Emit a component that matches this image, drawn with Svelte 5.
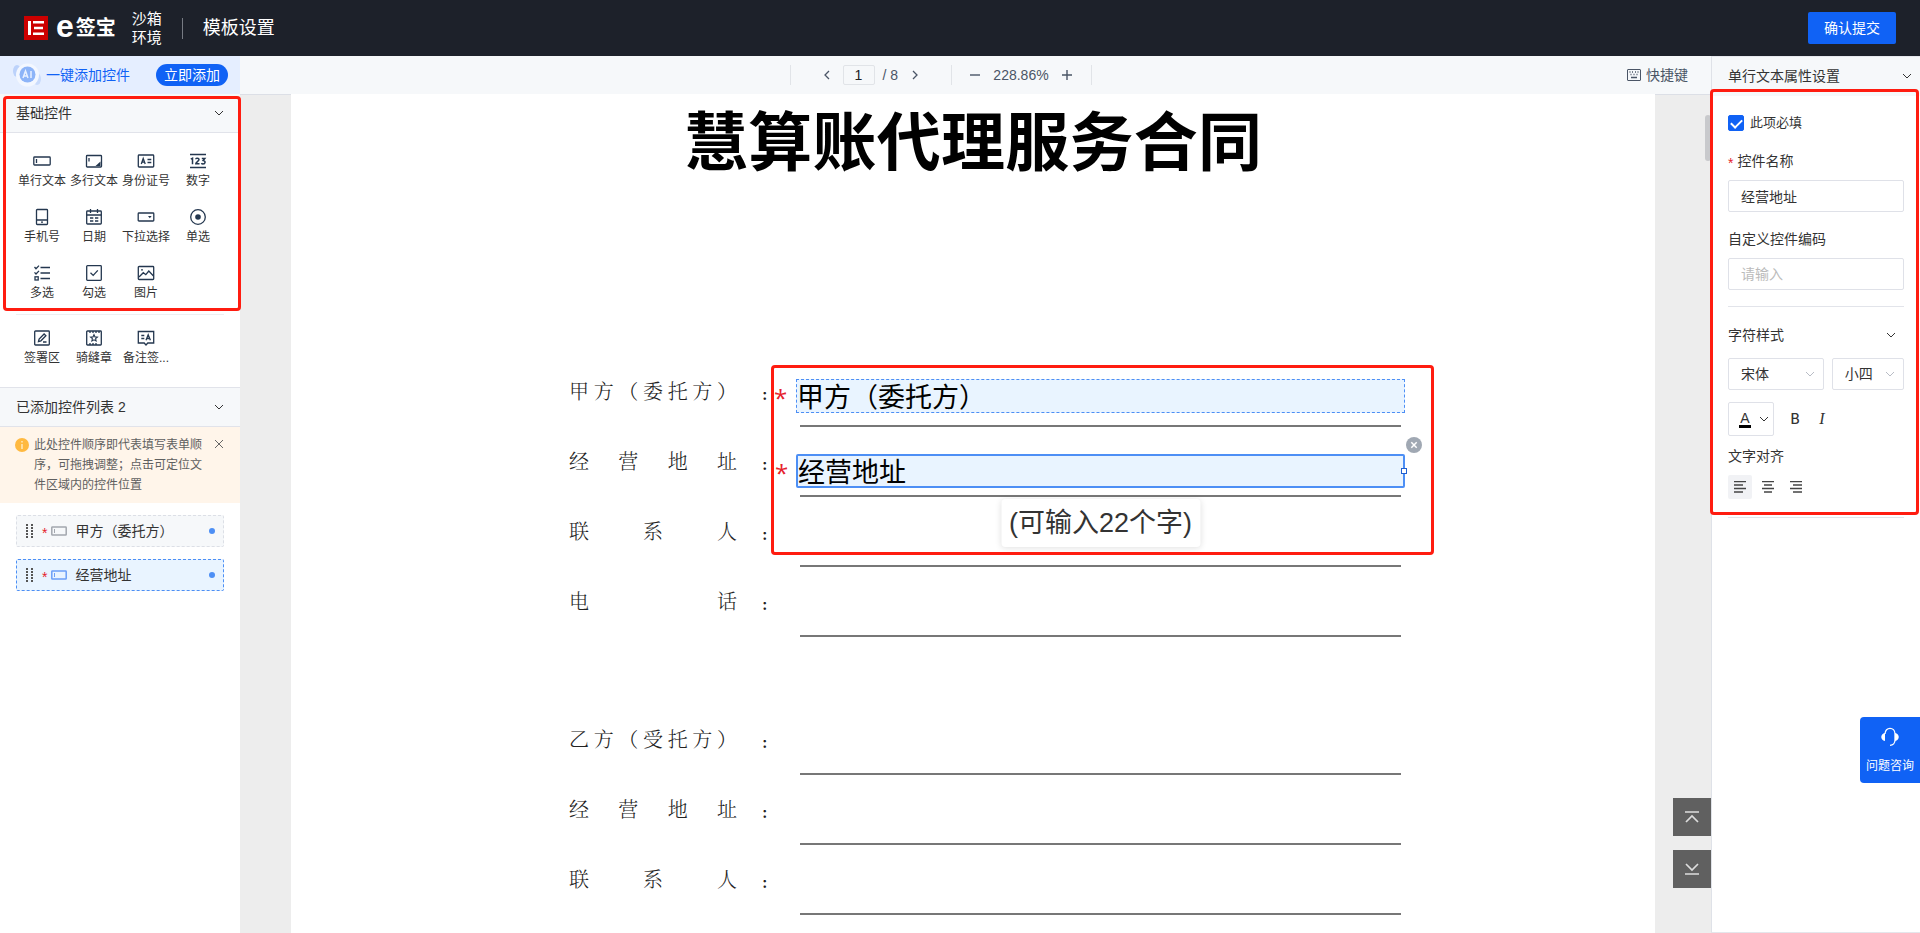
<script>
  const basicControls = [
    { icon: 'single', label: '单行文本' },
    { icon: 'multi', label: '多行文本' },
    { icon: 'idcard', label: '身份证号' },
    { icon: 'number', label: '数字' },
    { icon: 'phone', label: '手机号' },
    { icon: 'date', label: '日期' },
    { icon: 'dropdown', label: '下拉选择' },
    { icon: 'radio', label: '单选' },
    { icon: 'checks', label: '多选' },
    { icon: 'check', label: '勾选' },
    { icon: 'image', label: '图片' }
  ];
  const signControls = [
    { icon: 'sign', label: '签署区' },
    { icon: 'seal', label: '骑缝章' },
    { icon: 'remark', label: '备注签...' }
  ];
  const added = ['甲方（委托方）', '经营地址'];
  let selected = $state(1);
  let required = $state(true);
  let name = $state('经营地址');
  let code = $state('');
  let page = $state('1');

  const partyA = ['甲方（委托方）', '经营地址', '联系人', '电话'];
  const partyB = ['乙方（受托方）', '经营地址', '联系人'];
</script>

{#snippet chevron()}
  <svg class="chevron" width="10" height="10" viewBox="0 0 10 10" fill="none" stroke="currentColor" stroke-width="1" aria-hidden="true"><path d="M1 3l4 4 4-4" /></svg>
{/snippet}

{#snippet glyph(kind)}
  <svg width="18" height="18" viewBox="0 0 18 18" fill="none" stroke="currentColor" stroke-width="1.3" aria-hidden="true">
    {#if kind === 'single'}
      <rect x="0.8" y="5" width="16.4" height="8" rx="0.8" /><path d="M3.5 7v4" />
    {:else if kind === 'multi'}
      <rect x="1.5" y="3.5" width="15" height="11.5" rx="0.8" /><path d="M4 6v3.5" /><path d="M15.500 9.500v4.500h-5z" fill="currentColor" stroke="none" />
    {:else if kind === 'idcard'}
      <rect x="1.3" y="3" width="15.4" height="12" rx="0.8" /><path d="M4.3 12l1.9-5.5L8.200 12M5 10.200h2.500M10.500 7.500h3.800M10.500 10.500h3.800" />
    {:else if kind === 'number'}
      <path d="M1 2.500h16M1 15.500h16" stroke-width="1.500" /><path d="M1.800 7.200l1.700-1v6M6.800 7.300c0-1.500 3.200-1.500 3.200.3 0 1.500-3.200 2.500-3.200 4.100h3.700M12.800 6.500h3l-1.600 2c2.800.3 2.200 3.500-.2 3.500-.8 0-1.300-.2-1.600-.8" stroke-width="1.500" />
    {:else if kind === 'phone'}
      <rect x="3.500" y="1.500" width="11" height="15" rx="0.8" /><path d="M3.500 12h11M8 14.200h2" />
    {:else if kind === 'date'}
      <rect x="1.700" y="3" width="14.600" height="13" rx="0.8" /><path d="M1.700 7h14.600M5.500 1v4M12.500 1v4M5 10h3.300M10 10h3.300M5 13h3.300M10 13h3.300" />
    {:else if kind === 'dropdown'}
      <rect x="1.200" y="5" width="15.600" height="8" rx="0.8" /><path d="M11 8h3.600l-1.800 2.300z" fill="currentColor" stroke="none" />
    {:else if kind === 'radio'}
      <circle cx="9" cy="9" r="7.300" /><circle cx="9" cy="9" r="2.800" fill="currentColor" stroke="none" />
    {:else if kind === 'checks'}
      <path d="M1.500 3l1.500 1.700L6 1.600M1.500 8.400L3 10l3-3.100M7.500 3.500h9.500M7.500 9h9.500M7.500 14.500h9.500" /><rect x="2" y="12.800" width="3.200" height="3.200" />
    {:else if kind === 'check'}
      <rect x="1.700" y="1.700" width="14.600" height="14.600" rx="0.8" /><path d="M5.500 8.800l2.700 2.600 4.600-5" />
    {:else if kind === 'image'}
      <rect x="1.300" y="2.500" width="15.400" height="13" rx="0.8" /><path d="M2 13l4.300-4.300 2.500 2 3-3.700 4.700 5" /><circle cx="5" cy="5.800" r="0.900" fill="currentColor" stroke="none" />
    {:else if kind === 'sign'}
      <rect x="1.700" y="2" width="14.600" height="14" rx="0.8" /><path d="M5.500 12.500l.6-2.500 5-5 1.800 1.800-5 5zM10 13h3.500" />
    {:else if kind === 'seal'}
      <rect x="1.700" y="2" width="14.600" height="14" rx="0.8" /><path d="M5 2v2M8 2v2M11 2v2M14 2v2M5 14v2M8 14v2M11 14v2" /><path d="M9 5.700l1 2.200 2.400.2-1.800 1.600.5 2.300L9 10.800 6.900 12l.5-2.300-1.800-1.600 2.400-.2z" stroke-width="1.100" />
    {:else if kind === 'remark'}
      <path d="M1.300 2.500h15.400v11.500h-5.900L9 16l-1.800-2H1.300z" /><path d="M4.300 6.500h3M4.300 9.500h3M9 11.300l2.200-5.500 2.200 5.500M9.800 9.500h2.800" />
    {/if}
  </svg>
{/snippet}

{#snippet clause(label, index, party)}
  <div class="clause">
    <span class="clause-name">{label}</span>
    <span class="colon">：</span>
    <div class="blank">
      {#if party === 'a' && index === 0}
        <div class="field first"><span class="must">*</span>甲方（委托方）</div>
      {:else if party === 'a' && index === 1}
        <div class="field active">
          <span class="must">*</span>{name}
          <i class="handle"></i>
          <button class="remove" aria-label="删除">
            <svg width="16" height="16" viewBox="0 0 16 16" stroke="#fff" stroke-width="1.500"><path d="M5.300 5.300l5.400 5.400M10.700 5.300l-5.400 5.400" /></svg>
          </button>
          <span class="hint">(可输入22个字)</span>
        </div>
      {/if}
    </div>
  </div>
{/snippet}

<div class="app">
  <header class="topbar">
    <div class="brand">
      <svg width="24" height="24" viewBox="0 0 24 24" aria-hidden="true"><rect width="24" height="24" fill="#cc0000" /><path d="M4 5h3v14H4zM9 5h11v2.500H9zM10 10.800h9v2.500h-9zM9 16.500h11V19H9z" fill="#fff" /></svg>
      <span class="brand-name"><b class="brand-e">e</b>签宝</span>
    </div>
    <span class="env">沙箱环境</span>
    <i class="bar"></i>
    <h1>模板设置</h1>
    <button class="submit">确认提交</button>
  </header>

  <div class="columns">
    <aside class="left">
      <div class="ai">
        <svg width="28" height="28" viewBox="0 0 28 28" aria-hidden="true">
          <ellipse cx="4" cy="10" rx="4" ry="6" fill="#bcd2fb" /><ellipse cx="24" cy="18" rx="4" ry="6" fill="#c9dbfc" />
          <circle cx="14.500" cy="14" r="11.500" fill="#f3f7ff" /><circle cx="14.500" cy="13.500" r="8" fill="#8db4f8" />
          <path d="M10 17l2.500-7 2.500 7M11 15h3M18 10v7" stroke="#e8f0ff" stroke-width="1.500" fill="none" />
        </svg>
        <span>一键添加控件</span>
        <button>立即添加</button>
      </div>

      <div class="group-head"><h2>基础控件</h2>{@render chevron()}</div>
      <div class="tools">
        {#each basicControls as c}
          <button class="tool">{@render glyph(c.icon)}<span>{c.label}</span></button>
        {/each}
      </div>
      <div class="tools signing">
        {#each signControls as c}
          <button class="tool">{@render glyph(c.icon)}<span>{c.label}</span></button>
        {/each}
      </div>

      <div class="group-head second"><h2>已添加控件列表 2</h2>{@render chevron()}</div>
      <div class="notice">
        <svg width="14" height="14" viewBox="0 0 14 14" aria-hidden="true"><circle cx="7" cy="7" r="7" fill="#ffb940" /><path d="M7 3v1.500M7 6v5" stroke="#fff0d0" stroke-width="1.300" /></svg>
        <p>此处控件顺序即代表填写表单顺序，可拖拽调整；点击可定位文件区域内的控件位置</p>
        <button aria-label="关闭"><svg width="10" height="10" viewBox="0 0 10 10" stroke="#666" stroke-width="1"><path d="M1 1l8 8M9 1l-8 8" /></svg></button>
      </div>
      <ul class="added">
        {#each added as item, i}
          <li>
            <button class:on={selected === i} onclick={() => (selected = i)}>
              <svg width="8" height="14" viewBox="0 0 8 14" fill="#555" aria-hidden="true">
                {#each [0, 3, 6, 9, 12] as y}<rect x="0" {y} width="2" height="2" /><rect x="5" {y} width="2" height="2" />{/each}
              </svg>
              <span class="star">*</span>
              <svg class="kind" width="16" height="10" viewBox="0 0 16 10" fill="none" stroke="currentColor" stroke-width="1.500" aria-hidden="true"><rect x="0.800" y="1" width="14.400" height="8" rx="0.600" /><path d="M3.500 3v4" stroke-width="1" /></svg>
              <span class="item-name">{item}</span>
              <i></i>
            </button>
          </li>
        {/each}
      </ul>
      <div class="mark mark-left"></div>
    </aside>

    <main>
      <div class="toolbar">
        <div class="pager">
          <i></i>
          <div class="pages">
            <button aria-label="上一页"><svg width="8" height="10" viewBox="0 0 8 10" fill="none" stroke="currentColor" stroke-width="1.300"><path d="M6 1L2 5l4 4" /></svg></button>
            <input aria-label="页码" bind:value={page} />
            <span>/ 8</span>
            <button aria-label="下一页"><svg width="8" height="10" viewBox="0 0 8 10" fill="none" stroke="currentColor" stroke-width="1.300"><path d="M2 1l4 4-4 4" /></svg></button>
          </div>
          <i></i>
          <div class="zoom">
            <button aria-label="缩小"><svg width="10" height="10" viewBox="0 0 10 10" stroke="currentColor" stroke-width="1.400"><path d="M0 5h10" /></svg></button>
            <span>228.86%</span>
            <button aria-label="放大"><svg width="10" height="10" viewBox="0 0 10 10" stroke="currentColor" stroke-width="1.400"><path d="M0 5h10M5 0v10" /></svg></button>
          </div>
          <i></i>
        </div>
        <button class="keys">
          <svg width="14" height="12" viewBox="0 0 14 12" fill="none" stroke="currentColor" aria-hidden="true"><rect x="0.500" y="0.500" width="13" height="11" rx="0.500" /><path d="M2.500 3h1M5 3h1M8 3h1M10.500 3h1M3.500 5.500h1M6.500 5.500h1M9.500 5.500h1M4 8.500h6" stroke-width="1.400" /></svg>
          快捷键
        </button>
      </div>

      <div class="viewer">
        <article class="sheet">
          <h2 class="doc-title">慧算账代理服务合同</h2>
          <section class="party">
            {#each partyA as label, i}{@render clause(label, i, 'a')}{/each}
          </section>
          <section class="party">
            {#each partyB as label, i}{@render clause(label, i, 'b')}{/each}
          </section>
          <div class="mark mark-doc"></div>
        </article>
        <i class="thumb"></i>
        <div class="jump">
          <button aria-label="到顶部"><svg width="14" height="14" viewBox="0 0 14 14" fill="none" stroke="#ddd" stroke-width="1.700"><path d="M0 2h14M1 12l6-6 6 6" /></svg></button>
          <button aria-label="到底部"><svg width="14" height="14" viewBox="0 0 14 14" fill="none" stroke="#ddd" stroke-width="1.700"><path d="M0 12h14M1 2l6 6 6-6" /></svg></button>
        </div>
      </div>
    </main>

    <aside class="right">
      <div class="prop-head"><h2>单行文本属性设置</h2>{@render chevron()}</div>
      <form class="props">
        <label class="tick"><input type="checkbox" bind:checked={required} />此项必填</label>
        <label class="name-label" for="ctl-name"><span class="star">*</span>控件名称</label>
        <input id="ctl-name" class="text" bind:value={name} />
        <label class="name-label" for="ctl-code">自定义控件编码</label>
        <input id="ctl-code" class="text" placeholder="请输入" bind:value={code} />
        <hr />
        <div class="style-head"><h3>字符样式</h3>{@render chevron()}</div>
        <div class="fonts">
          <span class="pick family"><select aria-label="字体"><option>宋体</option></select>{@render chevron()}</span>
          <span class="pick size"><select aria-label="字号"><option>小四</option></select>{@render chevron()}</span>
        </div>
        <div class="format">
          <button type="button" class="color" aria-label="文字颜色"><span>A</span>{@render chevron()}</button>
          <button type="button" class="bold">B</button>
          <button type="button" class="italic">I</button>
        </div>
        <h3>文字对齐</h3>
        <div class="aligns">
          <button type="button" class="on" aria-label="左对齐"><svg width="12" height="12" viewBox="0 0 12 12"><path d="M0 .5h12M0 4h9M0 7.500h12M0 11h9" /></svg></button>
          <button type="button" aria-label="居中对齐"><svg width="12" height="12" viewBox="0 0 12 12"><path d="M0 .5h12M2 4h8M0 7.500h12M2 11h8" /></svg></button>
          <button type="button" aria-label="右对齐"><svg width="12" height="12" viewBox="0 0 12 12"><path d="M0 .5h12M3 4h9M0 7.500h12M3 11h9" /></svg></button>
        </div>
        <hr class="end" />
      </form>
      <div class="mark mark-right"></div>
      <button class="help">
        <svg width="20" height="20" viewBox="0 0 20 20" fill="none" stroke="#fff" stroke-width="1.300" aria-hidden="true"><path d="M5 7c0-7.500 10-7.500 10 0v6c0 3-2 5.300-5 5.300" /><path d="M5 6v8c-5-1-5-7 0-8zM15 6v8c5-1 5-7 0-8z" fill="#fff" stroke="none" /></svg>
        <span>问题咨询</span>
      </button>
    </aside>
  </div>
</div>

<style>
  :global(body) { margin: 0; }
  .app, .app :global(*) { box-sizing: border-box; }
  .app {
    height: 100vh;
    display: flex;
    flex-direction: column;
    overflow: hidden;
    font-family: "Liberation Sans", "Noto Sans CJK SC", sans-serif;
    font-size: 14px;
    line-height: 20px;
    color: #333;
    background: #fff;
  }
  button, input, select { font: inherit; color: inherit; margin: 0; padding: 0; border: 0; background: none; }
  button { cursor: pointer; }
  h1, h2, h3, p, ul { margin: 0; padding: 0; font-weight: 400; font-size: 14px; }
  svg { display: block; flex: none; }

  .topbar { display: flex; align-items: center; flex: none; height: 56px; padding: 0 24px; background: #1d212a; color: #fff; }
  .brand { display: flex; align-items: center; gap: 8px; }
  .brand-name { font-size: 20px; font-weight: 700; line-height: 24px; display: flex; align-items: center; gap: 2px; }
  .brand-e { font-size: 32px; line-height: 20px; padding-bottom: 4px; }
  .env { width: 30px; margin-left: 16px; font-size: 15px; line-height: 19px; }
  .bar { width: 1px; height: 21px; margin: 0 20px; background: #777b83; }
  .topbar h1 { font-size: 18px; line-height: 24px; }
  .submit { margin-left: auto; width: 88px; height: 32px; border-radius: 2px; background: #1062f5; }

  .columns { display: flex; flex: 1; min-height: 0; }
  .left { position: relative; flex: none; width: 240px; background: #fff; }
  .ai { display: flex; align-items: center; height: 38px; padding: 0 12px 0 13px; background: #e5eeff; color: #1062f5; }
  .ai span { margin-left: 5px; }
  .ai button { margin-left: auto; width: 72px; height: 22px; border-radius: 11px; background: #1062f5; color: #fff; }
  .group-head { display: flex; align-items: center; justify-content: space-between; height: 39px; padding: 0 16px; background: #f6f8fa; border-bottom: 1px solid #e1e3ea; }
  .group-head.second { height: 40px; border-top: 1px solid #e1e3ea; }
  .tools { display: grid; grid-template-columns: repeat(4, 52px); row-gap: 16px; padding: 19px 16px 0; color: #24374f; }
  .tool { display: flex; flex-direction: column; align-items: center; height: 40px; gap: 2px; font-size: 12px; }
  .tool span { color: #333; white-space: nowrap; line-height: 18px; }
  .signing { position: relative; margin: 10px 0 18px; padding-top: 15px; }
  .signing::before { content: ""; position: absolute; top: 0; left: 16px; right: 16px; height: 1px; background: #eeeff1; }
  .notice { display: flex; align-items: flex-start; padding: 8px 16px 8px 15px; background: #fff5ea; font-size: 12px; color: #606060; }
  .notice svg { margin-top: 3px; }
  .notice p { flex: 1; margin-left: 5px; font-size: 12px; }
  .notice button { margin: 1px 0 0 10px; }
  .added { display: grid; gap: 12px; padding: 12px 16px; list-style: none; }
  .added button { display: flex; align-items: center; width: 100%; height: 32px; padding: 0 8px 0 9px; border: 1px dashed #dcdfe6; border-radius: 2px; background: #f6f8fa; }
  .added button.on { background: #e9f4ff; border-color: #4d8ff5; }
  .star { color: #e5222b; font-size: 14px; }
  .added .star { margin: 4px 4px 0 8px; }
  .kind { color: #a3a7ae; }
  .on .kind { color: #6c9ff8; }
  .item-name { margin-left: 8px; }
  .added i { margin-left: auto; width: 6px; height: 6px; border-radius: 3px; background: #4d8ff5; }

  .mark { position: absolute; border: 3px solid #ff1c10; border-radius: 4px; pointer-events: none; z-index: 3; }
  .mark-left { left: 3px; right: -1px; top: 40px; height: 215px; }
  .mark-doc { left: 480px; right: 221px; top: 271px; height: 190px; }
  .mark-right { left: -2px; right: 1px; top: 33px; height: 426px; }

  main { flex: 1; min-width: 0; display: flex; flex-direction: column; }
  .toolbar { display: grid; grid-template-columns: 1fr auto 1fr; align-items: center; flex: none; height: 38px; background: #f6f8fa; color: #4a5566; }
  .pager { grid-column: 2; display: flex; align-items: center; padding-right: 70px; }
  .pager i { width: 1px; height: 20px; background: #e1e4e8; }
  .pages { display: flex; align-items: center; width: 160px; padding: 0 32px; }
  .pages input { width: 32px; height: 20px; border: 1px solid #e1e4e8; border-radius: 2px; text-align: center; color: #222; margin: 0 8px 0 12px; }
  .pages span { flex: 1; white-space: nowrap; }
  .zoom { display: flex; align-items: center; justify-content: center; gap: 13px; width: 139px; }
  .keys { display: flex; align-items: center; gap: 5px; justify-self: end; margin-right: 23px; }
  .viewer { position: relative; flex: 1; min-height: 0; display: flex; padding: 0 56px 0 51px; overflow: hidden; background: #ededed; box-shadow: inset 0 1px #dcdfe6; }
  .sheet { position: relative; flex: 1; background: #fff; }
  .doc-title { width: 578px; margin: 17px auto 182px; font-size: 64px; line-height: 64px; font-weight: 700; color: #000; text-align-last: justify; white-space: nowrap; }
  .party { width: 856px; margin: 0 auto 68px; padding-left: 24px; }
  .clause { display: flex; height: 70px; font-family: "Noto Serif CJK SC", "Noto Sans CJK SC", sans-serif; font-size: 20px; font-weight: 300; color: #222; }
  .clause-name { width: 168px; padding-top: 22px; line-height: 24px; text-align-last: justify; }
  .colon { width: 63px; padding: 25px 0 0 24px; line-height: 24px; font-size: 14px; font-weight: 700; }
  .blank { position: relative; flex: 1; border-bottom: 2px solid #777; }
  .field { position: absolute; left: -4px; right: -4px; height: 34px; border: 1px dashed #4d8ff5; background: #e9f4ff; font: 400 27px/36px "Liberation Sans", "Noto Sans CJK SC", sans-serif; color: #000; }
  .first { top: 22px; }
  .active { top: 27px; border: 2px solid #4d8ff5; border-radius: 2px; line-height: 34px; }
  .must { position: absolute; left: -23px; top: 0; font-family: "Open Sans", sans-serif; font-size: 24px; color: #e5222b; }
  .handle { position: absolute; right: -4px; top: 12px; width: 6px; height: 6px; border: 1px solid #1f5fd0; background: #fff; }
  .remove { position: absolute; right: -19px; top: -19px; width: 16px; height: 16px; border-radius: 8px; background: #a0a8b3; }
  .hint { position: absolute; left: 50%; top: 43px; transform: translateX(-50%); padding: 0 8px; border-radius: 4px; background: #fff; box-shadow: 0 1px 6px rgba(0, 0, 0, .12); line-height: 48px; color: #333; white-space: nowrap; }
  .thumb { position: absolute; right: 0; top: 21px; width: 6px; height: 46px; border-radius: 3px; background: #c8c9cc; }
  .jump { position: absolute; right: 0; bottom: 45px; display: grid; gap: 14px; }
  .jump button { display: grid; place-items: center; width: 38px; height: 38px; background: #606060; }

  .right { position: relative; flex: none; width: 209px; border-left: 1px solid #dfe2e8; border-bottom: 1px solid #e4e6eb; background: #fff; }
  .prop-head { display: flex; align-items: center; justify-content: space-between; height: 40px; padding: 0 8px 2px 16px; background: #f6f8fa; border-top: 1px solid #e6e8ee; }
  .props { display: flex; flex-direction: column; padding: 16px 16px 0; }
  .tick { display: flex; align-items: center; gap: 6px; height: 22px; font-size: 13px; }
  .tick input { appearance: none; width: 16px; height: 16px; border-radius: 2px; border: 1px solid #c0c4cc; display: grid; place-items: center; }
  .tick input:checked { background: #1062f5; border-color: #1062f5; }
  .tick input:checked::after { content: ""; width: 9px; height: 5px; border-left: 2px solid #fff; border-bottom: 2px solid #fff; transform: translateY(-1px) rotate(-45deg); }
  .name-label { display: flex; align-items: center; gap: 4px; margin: 17px 0 9px; }
  .name-label .star { line-height: 12px; padding-top: 4px; }
  .text { width: 100%; height: 32px; padding: 0 12px; border: 1px solid #dfe1e8; border-radius: 2px; background: #fff; }
  .text::placeholder { color: #bbb; opacity: 1; }
  hr { width: 100%; height: 1px; margin: 16px 0 18px; border: 0; background: #e2e4ea; }
  .style-head { display: flex; align-items: center; justify-content: space-between; padding-right: 8px; }
  .fonts { display: flex; gap: 8px; margin: 13px 0 12px; }
  .pick { position: relative; display: flex; align-items: center; height: 32px; border: 1px solid #dfe1e8; border-radius: 2px; color: #b8bcc5; }
  .family { flex: 4; }
  .size { flex: 3; }
  .pick select { appearance: none; width: 100%; height: 100%; padding-left: 12px; color: #333; }
  .pick :global(.chevron) { position: absolute; right: 8px; pointer-events: none; }
  .format { display: flex; align-items: center; gap: 15px; margin-bottom: 10px; }
  .color { display: flex; align-items: center; gap: 8px; height: 34px; width: 46px; padding-left: 10px; border: 1px solid #dfe1e8; border-radius: 2px; }
  .color span { width: 12px; line-height: 14px; border-bottom: 3px solid #000; }
  .bold { font-family: Inter, sans-serif; font-weight: 500; width: 12px; }
  .italic { font: italic 16px/20px "Liberation Serif", serif; width: 12px; }
  .aligns { display: flex; gap: 4px; margin-top: 9px; }
  .aligns button { display: grid; place-items: center; width: 24px; height: 24px; border-radius: 2px; }
  .aligns .on { background: #f1f2f5; }
  .aligns path { stroke: #444; stroke-width: 1.3; }
  .end { margin: 18px 0 0; }
  .help { position: absolute; right: 0; bottom: 149px; display: flex; flex-direction: column; align-items: center; gap: 9px; width: 60px; height: 66px; padding-top: 10px; border-radius: 4px 0 0 4px; background: #1062f5; color: #fff; font-size: 12px; }
</style>
